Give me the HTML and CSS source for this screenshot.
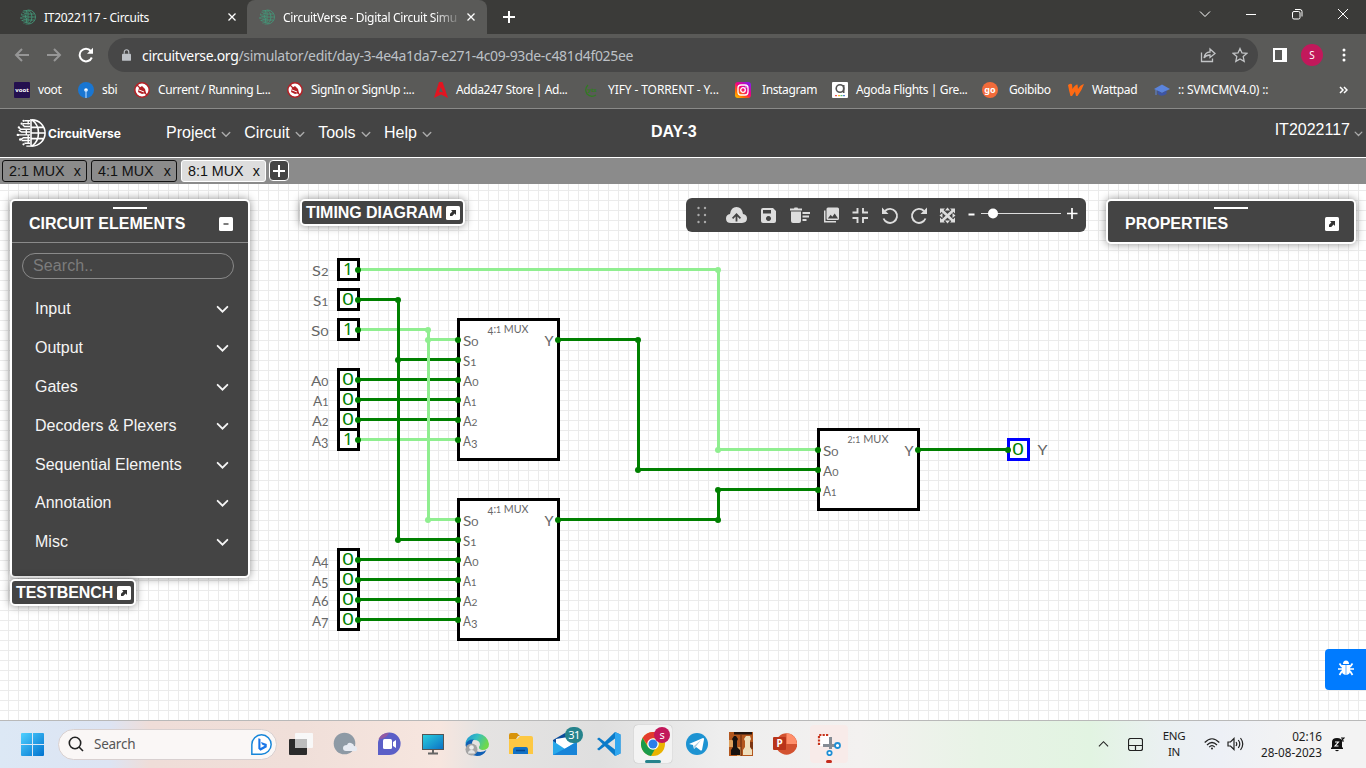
FILE: index.html
```html
<!DOCTYPE html>
<html lang="en">
<head>
<meta charset="utf-8">
<title>CircuitVerse - Digital Circuit Simulator</title>
<link rel="stylesheet" href="styles.css">
</head>
<body>
<svg class="defs" width="0" height="0">
  <symbol id="globe" viewBox="0 0 32 32">
    <g fill="none" stroke="currentColor" stroke-width="1.700">
      <path d="M16 1v30M17 2a14 14 0 0 1 0 28M17 2q7 5 7 14t-7 14M16 10h13M16 16h15M16 22h13"/>
      <path d="M15 3H9M15 6H7M15 9H9L7 7M15 12H5L3 10M15 15H6l-3-2M15 18H1M15 21H8l-3 2M15 24H6M15 27H9M15 30h-4M13 2v5M11 12v6M13 18v9" stroke-width="1.500"/>
    </g>
    <g fill="currentColor"><circle cx="8" cy="3" r="1.200"/><circle cx="6" cy="6" r="1.200"/><circle cx="3" cy="10" r="1.200"/><circle cx="2" cy="18" r="1.300"/><circle cx="4.500" cy="23" r="1.300"/><circle cx="8" cy="28" r="1.200"/></g>
  </symbol>
  <symbol id="down" viewBox="0 0 12 8"><path d="M1.500 1.500 6 6l4.500-4.500" fill="none" stroke="currentColor" stroke-width="1.700" stroke-linecap="round"/></symbol>
  <symbol id="popout" viewBox="0 0 14 14"><rect width="14" height="14" rx="1.500" fill="#fff"/><path d="M5 4h5v5L8.600 7.600 6.200 10H4V7.800l2.400-2.400z" fill="#333"/></symbol>
  <symbol id="nobadge" viewBox="0 0 16 16"><circle cx="8" cy="8" r="7.200" fill="#fff" stroke="#b32025" stroke-width="1.500"/><path d="m4 10 1-4 3-2 3 3 1 4-4 1z" fill="#b32025"/><path d="m3 3 10 10" stroke="#b32025" stroke-width="1.300"/><path d="m5 8 5 2" stroke="#fff"/></symbol>
</svg>

<div class="tabstrip">
  <div class="tab"><svg class="fav"><use href="#globe"/></svg><span class="tab-title">IT2022117 - Circuits</span><svg class="close" viewBox="0 0 8 8"><path d="m.5.5 7 7m0-7-7 7"/></svg></div>
  <div class="tab active"><svg class="fav"><use href="#globe"/></svg><span class="tab-title fade">CircuitVerse - Digital Circuit Simu</span><svg class="close" viewBox="0 0 8 8"><path d="m.5.5 7 7m0-7-7 7"/></svg></div>
  <svg class="newtab" viewBox="0 0 12 12"><path d="M6 0v12M0 6h12"/></svg>
  <div class="winbtns">
    <svg viewBox="0 0 12 12"><path d="m1 3.500 5 5 5-5"/></svg>
    <svg viewBox="0 0 12 12"><path d="M1 6.500h10"/></svg>
    <svg viewBox="0 0 12 12"><rect x="1.500" y="3.500" width="7.500" height="7.500" rx="1.500"/><path d="M4 1.500h5q2 0 2 2v5"/></svg>
    <svg viewBox="0 0 12 12"><path d="m1 1 10 10m0-10L1 11"/></svg>
  </div>
</div>

<div class="navbar">
  <svg class="nav" viewBox="0 0 16 16"><path d="M15 8H2m6-6L2 8l6 6"/></svg>
  <svg class="nav" viewBox="0 0 16 16"><path d="M1 8h13M8 2l6 6-6 6"/></svg>
  <svg class="nav reload" viewBox="0 0 16 16"><path d="M13.800 10.500A6.300 6.300 0 1 1 12.800 4"/><path d="M15 .8v6H9z" class="solid"/></svg>
  <div class="omnibox">
    <svg class="lock" viewBox="0 0 10 13"><path d="M1 5h8q1 0 1 1v6q0 1-1 1H1q-1 0-1-1V6q0-1 1-1z" fill="#bdc1c6"/><path d="M2.500 5V3.200a2.500 2.500 0 0 1 5 0V5" fill="none" stroke="#bdc1c6" stroke-width="1.300"/></svg>
    <span class="url"><b>circuitverse.org</b>/simulator/edit/day-3-4e4a1da7-e271-4c09-93de-c481d4f025ee</span>
    <svg class="omni-icon" viewBox="0 0 16 16"><path d="M1.500 5.500v9h11v-3M4 11q1-6 6-6V2l5 4.500-5 4V8q-4 0-6 3z"/></svg>
    <svg class="omni-icon" viewBox="0 0 16 16"><path d="m8 1.500 2 4.400 4.800.5-3.600 3.200 1 4.800L8 12l-4.200 2.400 1-4.800L1.200 6.400l4.800-.5z"/></svg>
  </div>
  <svg class="side" viewBox="0 0 14 14"><path d="M0 0h14v14H0zM2 2v10h7V2z" fill="#fff" fill-rule="evenodd"/></svg>
  <span class="avatar">S</span>
  <svg class="dots" viewBox="0 0 4 14"><circle cx="2" cy="2" r="1.500"/><circle cx="2" cy="7" r="1.500"/><circle cx="2" cy="12" r="1.500"/></svg>
</div>

<div class="bookmarks">
  <div class="bm w64"><svg viewBox="0 0 16 16"><rect width="16" height="16" rx="1" fill="#24104f"/><text x="8" y="10" class="voot">voot</text></svg><span>voot</span></div>
  <div class="bm w56"><svg viewBox="0 0 16 16"><circle cx="8" cy="8" r="8" fill="#1976d2"/><circle cx="8" cy="8" r="1.800" fill="#fff"/><path d="M8 8v8" stroke="#a9d2ff" stroke-width="1.200"/></svg><span>sbi</span></div>
  <div class="bm w153"><svg><use href="#nobadge"/></svg><span>Current / Running L...</span></div>
  <div class="bm w146"><svg><use href="#nobadge"/></svg><span>SignIn or SignUp :...</span></div>
  <div class="bm w151 s5"><svg viewBox="0 0 16 16"><path d="M6 0h3.500L15 16l-7-3.500L1 16zm1.700 5L6 10.500 8 9.700l2 .8z" fill="#e31420" fill-rule="evenodd"/></svg><span>Adda247 Store | Ad...</span></div>
  <div class="bm w151 s6"><svg viewBox="0 0 16 16"><path d="M4 3Q0 7 3 12q4 4 9 1" fill="none" stroke="#2f7d20" stroke-width="1.200"/><text x="8" y="9.500" class="yts">yts</text></svg><span>YIFY - TORRENT - Y...</span></div>
  <div class="bm w97 s7"><svg viewBox="0 0 16 16"><defs><linearGradient id="ig" x1="0" y1="1" x2=".8" y2="0"><stop offset="0" stop-color="#ffd000"/><stop offset=".3" stop-color="#ff6a00"/><stop offset=".6" stop-color="#f50080"/><stop offset="1" stop-color="#8a1be8"/></linearGradient></defs><rect width="16" height="16" rx="3" fill="url(#ig)"/><rect x="3" y="3" width="10" height="10" rx="3" fill="none" stroke="#fff" stroke-width="1.300"/><circle cx="8" cy="8" r="2.300" fill="none" stroke="#fff" stroke-width="1.300"/><circle cx="11" cy="5" r=".7" fill="#fff"/></svg><span>Instagram</span></div>
  <div class="bm w150"><svg viewBox="0 0 16 16"><rect width="16" height="16" rx="1" fill="#fff"/><circle cx="8" cy="6.500" r="3.800" fill="none" stroke="#555" stroke-width="1.600"/><path d="M11.700 3v8" stroke="#555" stroke-width="1.600"/><path d="M3 13.700h2" stroke="#e33"/><path d="M6 13.700h2" stroke="#fa0"/><path d="M8.500 13.700h2" stroke="#3a5"/><path d="M11 13.700h2" stroke="#36c"/></svg><span>Agoda Flights | Gre...</span></div>
  <div class="bm w86 s9"><svg viewBox="0 0 16 16"><circle cx="8" cy="8" r="8" fill="#f26b3a"/><text x="8" y="10.500" class="go">go</text></svg><span>Goibibo</span></div>
  <div class="bm w86"><svg viewBox="0 0 16 16"><path d="M0 3q3-2 4-.5l.5 4.500Q7 2.500 9.500 2.500l.5 4.500Q12 3 16 2q-2 6-6.500 12H8L7 9.500 4 14H2.500Q1 9 0 3z" fill="#ff6a13"/></svg><span>Wattpad</span></div>
  <div class="bm s11"><svg viewBox="0 0 16 16"><path d="m0 7 8-4.500L16 7l-8 4z" fill="#5b84dc"/><path d="M3.500 8.500V12q4 3.500 9 0V8.500L8 11z" fill="#3d55a5"/><path d="M2 8v5" stroke="#5b84dc"/></svg><span>:: SVMCM(V4.0) ::</span></div>
  <svg class="more" viewBox="0 0 9 8"><path d="m1 1 3 3-3 3m4-6 3 3-3 3"/></svg>
</div>

<header class="appbar">
  <svg class="logo"><use href="#globe"/></svg><span class="brand">CircuitVerse</span>
  <nav>
    <span>Project<svg><use href="#down"/></svg></span>
    <span>Circuit<svg><use href="#down"/></svg></span>
    <span>Tools<svg><use href="#down"/></svg></span>
    <span>Help<svg><use href="#down"/></svg></span>
  </nav>
  <strong class="project">DAY-3</strong>
  <span class="user">IT2022117<svg><use href="#down"/></svg></span>
</header>
<div class="circuit-tabs">
  <div class="ctab">2:1 MUX<span>x</span></div>
  <div class="ctab wide">4:1 MUX<span>x</span></div>
  <div class="ctab current">8:1 MUX<span>x</span></div>
  <div class="add"><svg viewBox="0 0 12 12"><path d="M6 0v12M0 6h12"/></svg></div>
</div>

<main class="canvas">
  <svg class="circuit" id="circuit" viewBox="0 184 1366 536"></svg>

  <section class="panel elements">
    <div class="panel-head"><i class="grip"></i><h2>CIRCUIT ELEMENTS</h2><svg class="box" viewBox="0 0 14 14"><rect width="14" height="14" rx="1.500" fill="#fff"/><path d="M4.500 7h5" stroke="#444" stroke-width="1.400"/></svg></div>
    <div class="search">Search..</div>
    <ul>
      <li>Input<svg><use href="#down"/></svg></li>
      <li>Output<svg><use href="#down"/></svg></li>
      <li>Gates<svg><use href="#down"/></svg></li>
      <li>Decoders &amp; Plexers<svg><use href="#down"/></svg></li>
      <li>Sequential Elements<svg><use href="#down"/></svg></li>
      <li>Annotation<svg><use href="#down"/></svg></li>
      <li>Misc<svg><use href="#down"/></svg></li>
    </ul>
  </section>
  <section class="panel mini testbench">TESTBENCH<svg class="box"><use href="#popout"/></svg></section>
  <section class="panel mini timing">TIMING DIAGRAM<svg class="box"><use href="#popout"/></svg></section>
  <section class="panel properties"><div class="panel-head"><i class="grip"></i><h2>PROPERTIES</h2><svg class="box"><use href="#popout"/></svg></div></section>

  <svg class="tools" viewBox="686 198 400 34">
    <g class="grip-dots"><circle cx="698.500" cy="208" r="1.200"/><circle cx="705" cy="208" r="1.200"/><circle cx="698.500" cy="215" r="1.200"/><circle cx="705" cy="215" r="1.200"/><circle cx="698.500" cy="222" r="1.200"/><circle cx="705" cy="222" r="1.200"/></g>
    <path class="f" fill-rule="evenodd" d="M731 223q-5 0-5-4.500 0-4 4-4.500 1-7 6.500-7t6.500 7q4 .5 4 4.500t-5 4.500zM736.500 213l-4.500 4.700 1.200 1.200 2.400-2.300v5h1.800v-5l2.400 2.300 1.200-1.200z"/>
    <path class="f" fill-rule="evenodd" d="M763 208h10l3 3v10q0 2-2 2h-11q-2 0-2-2v-11q0-2 2-2zm0 2v3.500h8V210zm5.500 6a2.500 2.500 0 1 0 .01 0z"/>
    <path class="f" d="M790 208.500h4l.5-1h3l.5 1h4v2h-12zM791 211.500h10v9.500q0 2-2 2h-6q-2 0-2-2zM802.500 212h7.500v2h-7.500zM802.500 215.500h6.500v2h-6.500zM802.500 219h4v2h-4z"/>
    <path class="f" fill-rule="evenodd" d="M828 207.500h9.500q1.500 0 1.500 1.500v9.500q0 1.500-1.500 1.500H828q-1.500 0-1.500-1.500V209q0-1.500 1.500-1.500zm-.2 11h10.200l-3.300-5-2.400 3.300-1.600-2zM824 210.500h1.500V221H836v1.500h-12z"/>
    <path class="s" d="M857.500 208v4.500h-5M863 208v4.500h5M857.500 223v-5h-5M863 223v-5h5"/>
    <path class="s" d="M885 211a7 7 0 1 1-1.500 7.500"/><path class="f" d="M882 207.500v6.500h6.500z"/>
    <path class="s" d="M924 211a7 7 0 1 0 1.500 7.500"/><path class="f" d="M927 207.500v6.500h-6.500z"/>
    <path class="f" d="M940 208.500h5l-5 5zM955 208.500v5l-5-5zM940 222.500v-5l5 5zM955 222.500h-5l5-5zM947.500 207.500l2.500 3h-5zM947.500 223.500l2.500-3h-5zM939.500 215.500l3-2.500v5zM955.500 215.500l-3-2.500v5z"/><path d="m942 210.500 11 10.500m0-10.500-11 10.500" stroke="#ddd" stroke-width="2.600"/>
    <path d="M968.500 214.500h6" stroke="#fff" stroke-width="2"/><path d="M981 213.500h80" stroke="#ddd"/><circle cx="993" cy="213.500" r="5" fill="#fff"/><path d="M1067 213.500h10.500M1072 208v11" stroke="#fff" stroke-width="1.700"/>
  </svg>
  <div class="bug"><svg viewBox="0 0 16 16"><path d="M5 4q0-3.500 3-3.500T11 4zM4 5h3.700v10Q4 14.500 3.800 11zM8.300 5H12l.2 6q-.2 3.500-3.900 4z" fill="#fff"/><path d="M4 7 1.500 3.500M12 7l2.500-3.500M4 9H0m12 0h4M4 11l-2.500 4M12 11l2.500 4" stroke="#fff" stroke-width="1.700" fill="none"/></svg></div>
</main>

<footer class="taskbar">
  <svg class="start" viewBox="0 0 23 23"><defs><linearGradient id="win" x2="1" y2="1"><stop offset="0" stop-color="#4fd0ff"/><stop offset="1" stop-color="#0072cf"/></linearGradient></defs><path fill="url(#win)" d="M0 1q0-1 1-1h10v11H0zM12 0h10q1 0 1 1v10H12zM0 12h11v11H1q-1 0-1-1zM12 12h11v10q0 1-1 1H12z"/></svg>
  <div class="wsearch"><svg viewBox="0 0 16 16"><circle cx="7" cy="7" r="5.700"/><path d="m11 11 4 4"/></svg><span>Search</span>
    <svg class="bing" viewBox="0 0 20 20"><path d="M.8 19.200V10A9.200 9.200 0 1 1 10 19.200z" fill="#fff" stroke="#1686d9" stroke-width="1.400"/><path d="m7 4 2 .8v8.500l4-2-2.500-1.300-1-2.500 5.500 2v3l-6 3.500L7 14z" fill="#1976e8"/></svg></div>
  <div class="apps">
    <div class="app"><svg viewBox="0 0 24 24"><rect x="6" y="1" width="18" height="15" rx="1" fill="#f8f8f8"/><rect y="7" width="18" height="16" rx="1" fill="#2b2b2b"/><path d="M6 7h12v9H6z" fill="#bdbdbd"/></svg></div>
    <div class="app"><svg viewBox="0 0 24 24"><circle cx="11.500" cy="11.500" r="10.800" fill="#8e9aa5"/><path d="M13 19q-3 0-3-3t4-3q1-3 4-2t3 3q3 0 3 3t-3 2z" fill="#e7ebf3"/></svg></div>
    <div class="app"><svg viewBox="0 0 24 24"><path d="M1 23V12A11.300 11.300 0 1 1 12 23z" fill="#5b5fc7"/><path d="M1.500 7A11 11 0 0 1 12 1q-3 6-10.500 6" fill="#925aa4"/><rect x="6" y="7" width="9" height="10" rx="1.500" fill="#fff"/><path d="m16 10 3-2v8l-3-2z" fill="#fff"/></svg></div>
    <div class="app"><svg viewBox="0 0 24 24"><defs><linearGradient id="pc" x2="1" y2="1"><stop offset="0" stop-color="#2bd0de"/><stop offset="1" stop-color="#0b6fc4"/></linearGradient></defs><rect x="1.500" y="2.500" width="21" height="15" fill="url(#pc)" stroke="#555"/><path d="M12 18v3M7 21.500h10" stroke="#666" stroke-width="2"/></svg></div>
    <div class="app"><svg viewBox="0 0 24 24"><defs><linearGradient id="edge" x2="1" y2=".4"><stop offset="0" stop-color="#1b8fd6"/><stop offset=".5" stop-color="#35bfc0"/><stop offset="1" stop-color="#6fd84c"/></linearGradient></defs><path d="M1 9A12 12 0 0 1 24 12q0 6-7 6-5-1-2-5 0-5-6-5-6 0-8 5-1-2 0-4z" fill="url(#edge)"/><path d="M.5 13Q2 7 9 7.500q-3 2-1.500 6.500 2 6 8 6 3 0 6-2-3 6-9.500 6Q2 24 .5 13z" fill="#0f5fb4"/><circle cx="6.500" cy="17.500" r="6" fill="#a4a4a4"/><circle cx="6.500" cy="15.500" r="2.300" fill="#eee"/><path d="M3 21.500q0-3.500 3.500-3.500t3.500 3.500" fill="#e3e3e3"/></svg></div>
    <div class="app"><svg viewBox="0 0 24 24"><path d="M0 3q0-2 2-2h6l3 3h-2l-2 3H0z" fill="#d8930a"/><path d="M0 7h8l3-3h11q2 0 2 2v16H0z" fill="#fdc843"/><path d="M4 22v-4q0-3 3-3h10q2 0 2 3v4z" fill="#1372c5"/><path d="M7 18.500h9" stroke="#07488f" stroke-width="1.500"/></svg></div>
    <div class="app"><svg viewBox="0 0 24 24"><path d="M0 8 12 1l12 7v15H0z" fill="#0b4c9b"/><path d="m3 7 18-3v9l-9 5-9-5z" fill="#fff"/><path d="m0 9 12 8 12-8v14H0z" fill="#28a8ea"/><path d="m0 23 24-13v13z" fill="#1784d8"/></svg><b class="badge">31</b></div>
    <div class="app"><svg viewBox="0 0 24 24"><path d="m18 0 5.500 2.500v19L18 24 2 8.500 0 7l2-1.500 16 12V6.500l-16 12L0 17l2-1.500z" fill="#0b7bc9"/><path d="m18 0 5.500 2.500v19L18 24z" fill="#30a7f0"/></svg></div>
    <div class="app on"><svg viewBox="0 0 24 24"><circle cx="12" cy="12" r="12" fill="#eab300"/><path d="M1.600 6A12 12 0 0 1 22.400 6H12l-6 6z" fill="#e33b2e"/><path d="M1.600 6 7 15l7 2-4 6.900A12 12 0 0 1 1.600 6z" fill="#1b9b4b"/><circle cx="12" cy="12" r="5.800" fill="#fff"/><circle cx="12" cy="12" r="4.500" fill="#2b7de9"/></svg><b class="badge pink">s</b><i class="run"></i></div>
    <div class="app"><svg viewBox="0 0 24 24"><circle cx="12" cy="12" r="11" fill="#1d93d2"/><path d="m4 12 14-6q1.500 0 1 1.500L17 18q-1 1-2 0l-4-3-2 2-1-4z" fill="#fff"/><path d="m9 14 7-6-5.500 7L9.500 17z" fill="#a9c9dd"/></svg></div>
    <div class="app"><svg viewBox="0 0 24 24"><rect width="24" height="24" fill="#b3571e"/><path d="M0 8h4v7H0zM8 15h4v9H8z" fill="#e0a25c"/><rect x="5" width="18" height="2.500" fill="#24150f"/><path d="M12 3v21" stroke="#5e2811"/><path d="M20 10h4v7h-4z" fill="#7c3613"/><path d="M5 4h2l2 3-1 2v6l3 3v5H2v-5l2-3V9L3 7z" fill="#171210"/><path d="M17 4h4l1 3-1 2v6l2 3v5h-9v-5l2-3V9l-1-2z" fill="#efdfbd"/></svg></div>
    <div class="app"><svg viewBox="0 0 24 24"><circle cx="13.500" cy="12" r="10.700" fill="#d35230"/><path d="M13.500 1.300A10.700 10.700 0 0 1 24 12H13.500z" fill="#ff8f6b"/><rect y="5" width="13" height="13" rx="1" fill="#b9341a"/><text x="6.500" y="15.300" class="pp">P</text></svg></div>
    <div class="app warm"><svg viewBox="0 0 24 24"><rect x="2" y="3" width="11" height="11" fill="#fff"/><path d="M2 13V3h10" fill="none" stroke="#c8341c" stroke-width="2.200" stroke-dasharray="2.200 1.200"/><path d="M13.500 5v12M6 13.500h12" stroke="#858c94" stroke-width="3"/><circle cx="20.500" cy="13.500" r="2.500" fill="#fff" stroke="#1e8fd5" stroke-width="1.800"/><circle cx="12.500" cy="21" r="2.200" fill="#fff" stroke="#1e8fd5" stroke-width="1.800"/></svg><i class="run red"></i></div>
  </div>
  <div class="tray">
    <svg class="up" viewBox="0 0 12 8"><path d="m1 6.500 5-5 5 5"/></svg>
    <svg class="pad" viewBox="0 0 15 13"><rect x=".5" y=".5" width="14" height="12" rx="2"/><path d="M1 7.500h13M7.500 7.500v5"/></svg>
    <div class="lang">ENG<br>IN</div>
    <svg class="wifi" viewBox="0 0 16 12"><path d="M.7 4.500q7.300-7.500 14.600 0M3 7q5-5 10 0M5.200 9.200q2.800-3 5.600 0"/><circle cx="8" cy="10.500" r="1" fill="#222" stroke="none"/></svg>
    <svg class="vol" viewBox="0 0 17 14"><path d="M1 5v4h2.500L7 12.500v-11L3.500 5zM9 5q1.500 2 0 4M11.300 3q3 4 0 8M13.500 1q4.500 6 0 12"/></svg>
    <div class="clock">02:16<br>28-08-2023</div>
    <svg class="bell" viewBox="0 0 14 15"><path d="M0 12h12v-1l-1-1V5q0-4-5-4T1 5v5l-1 1zM4 13h4q-2 2.500-4 0z" fill="#111"/><path d="M4 5h3.500L4 9h3.500" stroke="#fff" stroke-width="1.100" fill="none"/><path d="M10 1h3l-3 3h3" stroke="#111" fill="none"/></svg>
  </div>
</footer>
<script src="circuit.js"></script>
</body>
</html>
```
FILE: styles.css
```css
* { box-sizing: border-box; }
body { margin: 0; width: 1366px; height: 768px; overflow: hidden; display: flex; flex-direction: column; font-family: "Noto Sans", sans-serif; font-size: 12px; background: #fff; }
svg { display: block; flex: none; }
.defs { position: absolute; }
.tabstrip { height: 34px; background: #3b3b39; display: flex; color: #fff; }
.tab { width: 247px; height: 34px; padding: 0 11px 0 20px; display: flex; align-items: center; }
.tab.active { width: 240px; padding: 0 12px; background: #5a5a58; border-radius: 8px 8px 0 0; }
.fav { width: 16px; height: 16px; color: #43987a; margin-right: 8px; }
.tab-title { flex: 1; white-space: nowrap; letter-spacing: -.28px; }
.fade { margin-right: 8px; letter-spacing: -.3px; mask-image: linear-gradient(90deg, #000 85%, rgba(0,0,0,.15)); }
.close { width: 8px; height: 8px; stroke: #fff; stroke-width: 1.3; }
.newtab { width: 12px; height: 12px; margin: 11px 0 0 16px; stroke: #fff; stroke-width: 2; }
.winbtns { margin-left: auto; padding: 8px 17px 0 0; display: flex; gap: 34px; }
.winbtns svg { width: 12px; height: 12px; fill: none; stroke: #fff; }
.navbar { height: 39px; background: #5a5a58; display: flex; align-items: center; padding: 4px 0 1px 14px; }
.nav { width: 16px; height: 16px; margin-right: 16px; fill: none; stroke: #969696; stroke-width: 2; }
.reload { stroke: #fff; margin-right: 14px; }
.reload .solid { fill: #fff; stroke: none; }
.omnibox { width: 1150px; height: 34px; border-radius: 17px; background: #474747; display: flex; align-items: center; padding: 0 10px 0 13px; }
.lock { width: 9px; height: 12px; margin: 0 11px 0 1px; }
.url { flex: 1; font-size: 14px; letter-spacing: -.33px; color: #bdc1c6; white-space: nowrap; }
.url b { font-weight: 400; color: #fff; }
.omni-icon { width: 16px; height: 16px; margin-left: 16px; fill: none; stroke: #c2c4c6; stroke-width: 1.3; }
.side { width: 14px; height: 14px; margin-left: 15px; }
.avatar { width: 22px; height: 22px; margin-left: 14px; border-radius: 50%; background: #c2185b; color: #fff; font-size: 10px; line-height: 22px; text-align: center; }
.dots { width: 4px; height: 14px; margin-left: 19px; fill: #fff; }
.bookmarks { height: 36px; background: #5a5a58; border-bottom: 1px solid #8a8a88; display: flex; align-items: center; padding: 0 0 1px 14px; color: #fff; }
.bm { display: flex; align-items: center; gap: 8px; white-space: nowrap; letter-spacing: -.37px; }
.bm svg { width: 16px; height: 16px; }
.bm span { position: relative; top: -.5px; }
.w64 { width: 64px; } .w56 { width: 56px; } .w153 { width: 153px; } .w146 { width: 146px; }
.w151 { width: 151px; } .w97 { width: 97px; } .w150 { width: 150px; } .w86 { width: 86px; }
.s5 { gap: 7px; letter-spacing: -.42px; } .s6 { letter-spacing: -.1px; } .s7 { gap: 11px; } .s9 { gap: 11px; } .s11 { letter-spacing: -.2px; }
.voot, .yts, .go, .pp { font-family: "Noto Sans", sans-serif; font-weight: 700; text-anchor: middle; fill: #fff; font-size: 6px; letter-spacing: 0; }
.yts { fill: #2f7d20; } .go { font-size: 9px; } .pp { font-size: 10px; }
.more { width: 9px; height: 8px; margin: 0 18px 0 auto; fill: none; stroke: #fff; stroke-width: 1.5; }

.appbar { height: 49px; background: #444; border-bottom: 1px solid #fff; display: flex; align-items: center; padding: 0 3px 0 16px; color: #fff; font: 16px "Liberation Sans", sans-serif; }
.logo { width: 30px; height: 30px; }
.brand { font: 700 12px Inter, sans-serif; width: 73px; margin-left: 2px; letter-spacing: 0; }
.appbar nav { display: flex; margin-left: 45px; gap: 13.5px; }
.appbar nav span { display: flex; align-items: center; }
.appbar nav svg { width: 10px; height: 7px; margin: 2px 0 0 5px; color: #aaa; }
.project { margin-left: 219px; padding-bottom: 2px; }
.user { margin-left: auto; display: flex; padding-bottom: 6px; }
.user svg { width: 9px; height: 6px; margin: 10px 0 0 4px; color: #aaa; }
.circuit-tabs { height: 26px; background: #8b8b8b; display: flex; gap: 4px; padding: 2px; font: 14.3px "Liberation Sans", sans-serif; }
.ctab { width: 85px; height: 22px; border: 1px solid #111; border-radius: 3px; padding: 0 5px 0 6px; display: flex; justify-content: space-between; line-height: 20px; color: #111; }
.ctab.wide { width: 86px; }
.ctab.current { background: #ddd; border-color: #fff; }
.add { width: 20px; height: 21px; margin-left: -1px; border: 1px solid #fff; border-radius: 4px; background: #444; padding: 4px 3px; }
.add svg { width: 12px; height: 12px; stroke: #fff; stroke-width: 2; }

.canvas { height: 536px; position: relative; background-color: #fff; background-image: linear-gradient(90deg, #ebebeb 1px, transparent 1px), linear-gradient(#ebebeb 1px, transparent 1px); background-size: 10px 10px; background-position: 8px 6px; font: 16px "Liberation Sans", sans-serif; color: #fff; }
.circuit { width: 1366px; height: 536px; }
.circuit rect { fill: #fff; stroke: #000; stroke-width: 3; }
.circuit rect.out { stroke: #00f; }
.circuit text { font-family: Lato, sans-serif; font-weight: 400; fill: #666; }
.circuit text.digit { font-family: "Noto Sans", sans-serif; fill: #008000; font-size: 16px; }
.wire { fill: none; stroke: #008000; stroke-width: 3; }
.wire.hi { stroke: #90ee90; }
.node { fill: #008000; } .node.hi { fill: #90ee90; }
.panel { position: absolute; background: #444; border: 2px solid #fff; border-radius: 5px; box-shadow: 0 0 8px rgba(0,0,0,.45); }
.panel-head { position: relative; height: 42px; padding: 4px 15px 0 17px; display: flex; align-items: center; justify-content: space-between; }
.panel h2 { margin: 0; font-size: 16px; line-height: 18px; }
.grip { position: absolute; left: 50%; top: 6px; width: 34px; height: 2px; margin-left: -17px; background: #fff; }
.box { width: 14px; height: 14px; }
.elements { left: 10px; top: 15px; width: 240px; height: 379px; }
.elements .panel-head { border-bottom: 1px solid #8a8a8a; padding-top: 5px; }
.search { margin: 10px 14px 0 10px; height: 26px; border: 1px solid #8a8a8a; border-radius: 13px; padding: 0 10px; line-height: 23px; color: #7c7c7c; letter-spacing: .1px; }
.elements ul { list-style: none; margin: 11px 0 0; padding: 0 19px 0 23px; }
.elements li { height: 38.8px; display: flex; align-items: center; justify-content: space-between; color: #f5f5f5; }
.elements li svg { width: 13px; height: 9px; margin-top: 1px; }
.mini { height: 27px; display: flex; align-items: center; padding-left: 4px; font-weight: 700; gap: 4px; letter-spacing: -.05px; }
.testbench { left: 10px; top: 395px; width: 126px; }
.timing { left: 300px; top: 15px; width: 165px; }
.properties { left: 1106px; top: 15px; width: 250px; height: 45px; }
.tools { position: absolute; left: 686px; top: 14px; width: 400px; height: 34px; background: #444; border-radius: 6px; }
.tools .f { fill: #ddd; } .tools .s { fill: none; stroke: #ddd; stroke-width: 1.9; } .grip-dots { fill: #aaa; }
.bug { position: absolute; left: 1325px; top: 465px; width: 41px; height: 41px; background: #007bff; border-radius: 4px 0 0 4px; padding: 11px 13px; }
.bug svg { width: 16px; height: 16px; }

.taskbar { height: 48px; border-top: 1px solid #b9b9b9; display: flex; align-items: center; padding: 0 0 1px 21px; color: #1d1d1d; background: linear-gradient(90deg, #dce8f5 0, #dde4f3 110px, #efddd8 150px, #f0dfd9 300px, #f7e6df 440px, #e5e3e2 480px, #dfdfdf 600px, #eee 720px, #f3f1f0 860px, #e8f3e6 980px, #e2f4e2 1090px, #eaf0f1 1160px, #edf0f6 1220px, #f3f3f3 1300px); }
.start { width: 23px; height: 23px; }
.wsearch { width: 219px; height: 31px; margin-left: 14px; border-radius: 16px; border: 1px solid #d8d0d0; background: #faf7f6; display: flex; align-items: center; padding: 0 4px 0 9px; font-size: 13.5px; color: #555; letter-spacing: -.25px; }
.wsearch svg { width: 16px; height: 16px; fill: none; stroke: #222; stroke-width: 1.6; }
.wsearch span { margin-left: 10px; flex: 1; }
.wsearch .bing { width: 21px; height: 21px; stroke: none; }
.apps { display: flex; margin-left: 5px; gap: 6px; }
.app { position: relative; width: 38px; height: 38px; padding: 7px; border-radius: 4px; }
.app > svg { width: 24px; height: 24px; }
.app.on { background: #f3f3f3; box-shadow: 0 0 1px #999; }
.app.warm { background: #f8ebe9; }
.badge { position: absolute; left: 19px; top: 2px; width: 18px; height: 16px; border-radius: 8px; background: #26838c; color: #fff; font-size: 11px; font-weight: 400; line-height: 16px; text-align: center; letter-spacing: -.5px; }
.badge.pink { left: 20px; width: 16px; background: #c2185b; }
.run { position: absolute; left: 11px; bottom: 0; width: 16px; height: 3px; border-radius: 2px; background: #26838c; }
.run.red { left: 16px; width: 6px; background: #c42b1c; }
.tray { margin-left: auto; display: flex; align-items: center; padding-right: 21px; line-height: 16px; }
.tray svg { fill: none; stroke: #222; stroke-width: 1.2; }
.up { width: 11px; height: 8px; margin-right: 19px; }
.pad { width: 15px; height: 13px; margin-right: 18px; }
.lang { width: 26px; text-align: center; font-size: 11.5px; letter-spacing: -.3px; }
.wifi { width: 16px; height: 12px; margin-left: 17px; }
.vol { width: 17px; height: 14px; margin-left: 7px; }
.clock { width: 70px; margin-left: 8px; text-align: right; font-size: 11.7px; white-space: nowrap; }
.tray .bell { width: 14px; height: 15px; margin-left: 9px; stroke: none; }
```
FILE: circuit.js
```js
const svg = document.getElementById('circuit');
let out = '';
const wire = (pts, hi) => { out += `<polyline class="wire${hi ? ' hi' : ''}" points="${pts}"/>`; };
const node = (x, y, hi) => { out += `<circle class="node${hi ? ' hi' : ''}" cx="${x}" cy="${y}" r="3"/>`; };
const digit = (x, y, v) => {
  const w = v ? 10 : 12;
  out += `<text class="digit" x="${x - w / 2}" y="${y}" textLength="${w}" lengthAdjust="spacingAndGlyphs">${v}</text>`;
};

// Old-style numerals: 0-2 sit at x-height, 3-5 and 7 hang below the baseline.
// The widths follow a wide geometric face, so every label has a set length.
function label(str, x, y, size, anchor, len) {
  let shift = 0, s = '';
  for (const c of str) {
    let want = 0, fs = size;
    if ('012'.includes(c)) fs = size * 0.8;
    if ('3457'.includes(c)) { want = size * 0.17; fs = size * 0.95; }
    s += `<tspan dy="${want - shift}" font-size="${fs}">${c}</tspan>`;
    shift = want;
  }
  const left = anchor === 'end' ? x - len : anchor === 'middle' ? x - len / 2 : x;
  out += `<text x="${left}" y="${y}" xml:space="preserve" textLength="${len}" lengthAdjust="spacingAndGlyphs">${s}</text>`;
}
const pinLength = n => n.endsWith('0') ? 15.5 : n.endsWith('1') ? 13.5 : 14.5;

function chip(x, y, h, name, ins) {
  out += `<rect x="${x + .5}" y="${y + .5}" width="100" height="${h}"/>`;
  label(name, x + 50, y + 14, 11, 'middle', 41);
  ins.forEach((n, i) => label(n, x + 5, y + 26.500 + i * 20, 12.5, 'start', pinLength(n)));
  label('Y', x + 95.5, y + 26.500, 12.5, 'end', 9);
}

const four = ['S0', 'S1', 'A0', 'A1', 'A2', 'A3'];
chip(458, 319, 140, '4:1 MUX', four);
chip(458, 499, 140, '4:1 MUX', four);
chip(818, 429, 80, '2:1 MUX', ['S0', 'A0', 'A1']);

const inputs = [['S2', 270, 1], ['S1', 300, 0], ['S0', 330, 1], ['A0', 380, 0], ['A1', 400, 0], ['A2', 420, 0], ['A3', 440, 1], ['A4', 560, 0], ['A5', 580, 0], ['A6', 600, 0], ['A7', 620, 0]];
inputs.forEach(([n, y, v]) => {
  out += `<rect x="338.5" y="${y - 10.5}" width="20" height="20"/>`;
  digit(348, y + 5, v);
  label(n, 328.5, y + 5.5, 14, 'end', pinLength(n) + 2);
});
out += '<rect class="out" x="1008.5" y="439.500" width="20" height="20"/>';
digit(1018, 455, 0);
label('Y', 1037.5, 455, 14, 'start', 10);

wire('358,269.5 718.5,269.5 718.5,449.5 818,449.5', true);
wire('358,329.5 428.5,329.5', true);
wire('428,339.5 458,339.5', true);
wire('358,299.5 398.5,299.5 398.5,539.5 458,539.5');
wire('398,359.5 458,359.5');
[380, 400, 420, 560, 580, 600, 620].forEach(y => wire(`358,${y - .5} 458,${y - .5}`));
wire('358,439.5 458,439.5', true);
wire('428.5,329.5 428.5,519.5 458,519.5', true);
wire('398.5,430 398.5,450');
wire('558,339.5 638.5,339.5 638.5,469.5 818,469.5');
wire('558,519.5 718.5,519.5 718.5,489.5 818,489.5');
wire('918,449.5 1008,449.5');

inputs.forEach(i => node(358, i[1]));
for (let i = 0; i < 6; i++) { node(458, 340 + i * 20); node(458, 520 + i * 20); }
[[558, 340], [558, 520], [818, 450], [818, 470], [818, 490], [918, 450], [1008, 450], [398, 300], [398, 360], [398, 540], [638, 340], [638, 470], [718, 520], [718, 490]].forEach(p => node(...p));
[[718, 270], [718, 450], [428, 330], [428, 340], [428, 520]].forEach(p => node(...p, true));
svg.innerHTML = out;
```
